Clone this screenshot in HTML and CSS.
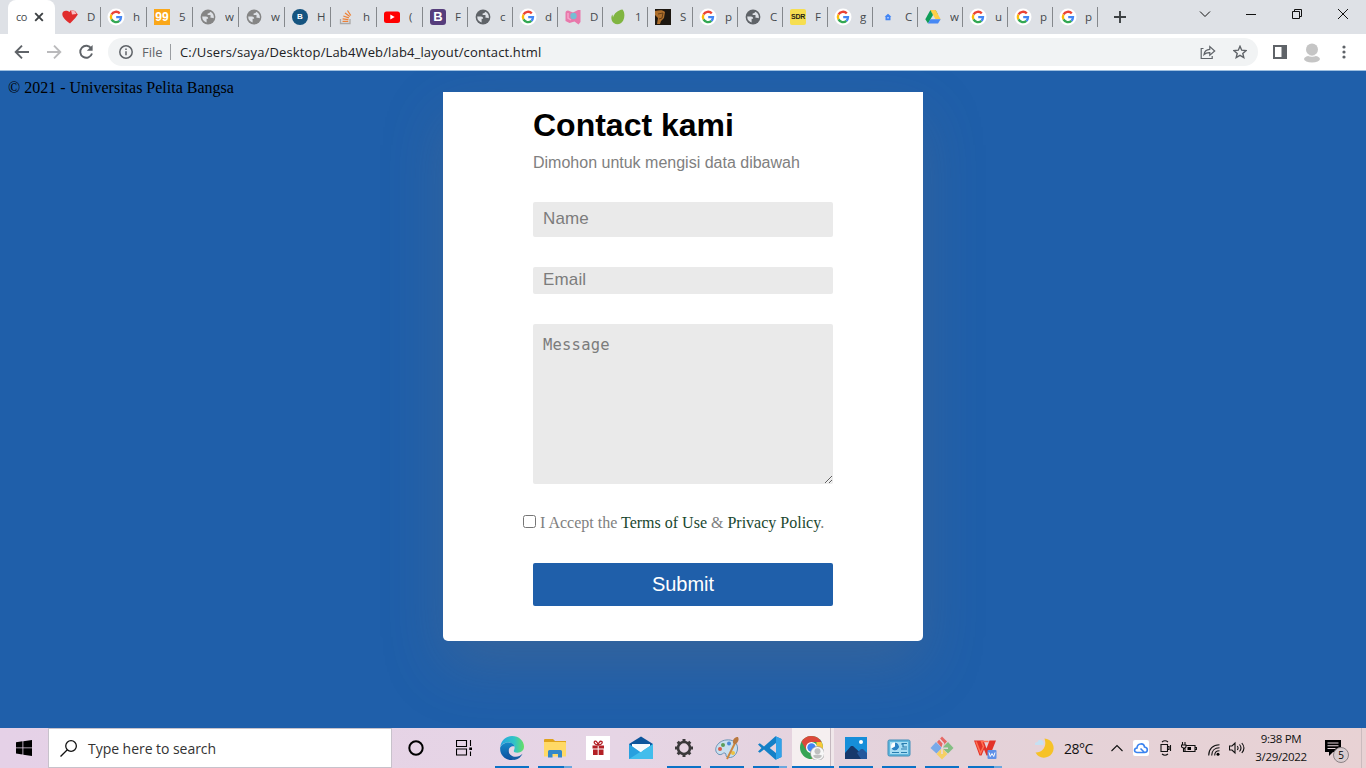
FILE: index.html
```html
<!DOCTYPE html>
<html lang="id">
<head>
<meta charset="utf-8">
<title>contact</title>
<link rel="stylesheet" href="styles.css">
</head>
<body>
<svg class="defs" aria-hidden="true">
  <symbol id="google" viewBox="0 0 18 18">
    <circle cx="9" cy="9" r="8.5" fill="#fff"/>
    <g fill="none" stroke-width="2.3">
      <path d="M12.8 5.4A5.1 5.1 0 0 0 4.5 6.6" stroke="#ea4335"/>
      <path d="M4.5 6.6A5.1 5.1 0 0 0 4.5 11.4" stroke="#fbbc05"/>
      <path d="M4.5 11.4A5.1 5.1 0 0 0 12.4 12.8" stroke="#34a853"/>
      <path d="M12.4 12.8A5.1 5.1 0 0 0 14 9.2H9.2" stroke="#4285f4"/>
    </g>
  </symbol>
  <symbol id="globe" viewBox="0 0 16 16">
    <circle cx="8" cy="8" r="7.4" fill="currentColor"/>
    <path d="M2.200 7.600H6Q8.300 7.700 8.200 9.800H6.600V13.600Q2.200 12 2.200 7.600zM10.200 2.700Q9.800 4.500 7.600 4.400V6H10.500V8.800Q12.800 8.400 13.800 9.200Q14.300 4.500 10.200 2.700z" fill="#dee1e6"/>
  </symbol>
</svg>

<header class="browser">
  <nav class="tabs">
    <div class="tab active"><span class="label">co</span>
      <svg class="close" viewBox="0 0 10 10"><path d="M1.200 1.200l7.600 7.600M8.800 1.200L1.200 8.800" stroke="#3c4043" stroke-width="1.900"/></svg></div>
    <div class="tab wide"><svg viewBox="0 0 16 16"><path d="M8 14.500C3 10.800.2 8 .3 4.700.5 1.300 5 .8 7.500 3L9 1l4 1 2.800 3.500L13.300 9z" fill="#e02d2d"/><path d="M9 1l1 4.500 4.500-.5-2-3z" fill="#f7bcc1"/></svg><span class="label">D</span></div>
    <div class="tab wide"><svg class="g"><use href="#google"/></svg><span class="label">h</span></div>
    <div class="tab wide"><span class="fav nine">99</span><span class="label">5</span></div>
    <div class="tab wide"><svg class="gray"><use href="#globe"/></svg><span class="label">w</span></div>
    <div class="tab wide"><svg class="gray"><use href="#globe"/></svg><span class="label">w</span></div>
    <div class="tab wide"><span class="fav round">B</span><span class="label">H</span></div>
    <div class="tab wide"><svg viewBox="0 0 16 16" fill="none"><path d="M2.500 10v4.500h9.500V10" stroke="#aaa8a7" stroke-width="1.300"/><path d="M4.500 12.400h5.800M4.600 9.800l5.800.8M5.300 7l5.600 1.800M7 4l4.800 3.500M9.500 1.500l3.300 5" stroke="#ed8137" stroke-width="1.250"/></svg><span class="label">h</span></div>
    <div class="tab wide"><svg viewBox="0 0 16 16"><rect y="2.500" width="16" height="11.500" rx="2.500" fill="#f00"/><path d="M6.300 5.600v5L10.700 8z" fill="#fff"/></svg><span class="label">(</span></div>
    <div class="tab"><span class="fav boot">B</span><span class="label">F</span></div>
    <div class="tab"><svg class="dark"><use href="#globe"/></svg><span class="label">c</span></div>
    <div class="tab"><svg class="g"><use href="#google"/></svg><span class="label">d</span></div>
    <div class="tab"><svg viewBox="0 0 16 16"><path d="M.5 4Q.5 1.500 3 1.500L8 3.500 13 1h2.500v12l-2 2.500-4-3-5 1.500L.5 12z" fill="#e878ab"/><circle cx="8.500" cy="7" r="3.200" fill="#76bdd3"/><path d="M3 4v5l3 2" fill="none" stroke="#f5a4ca" stroke-width="1.500"/></svg><span class="label">D</span></div>
    <div class="tab"><svg viewBox="0 0 16 16"><path d="M12.500 .5C14.800 3 15 8 13.200 11.500 11.500 15 7 16.500 3.800 14 .8 11.500.8 7.500 2.500 5.500L3 8.500C4 4.500 8 1 12.500 .5z" fill="#80b541"/></svg><span class="label">1</span></div>
    <div class="tab"><svg viewBox="0 0 16 16"><path d="M0 0h16v16H0z" fill="#1d1710"/><path d="M0 2c5-1 8-1 10 1l-1 6-3 3-1 3H2L3 9 0 6z" fill="#ae6f2c"/><path d="M3 5l5-1-1 5-3 1" stroke="#684016" fill="none"/></svg><span class="label">S</span></div>
    <div class="tab"><svg class="g"><use href="#google"/></svg><span class="label">p</span></div>
    <div class="tab"><svg class="dark"><use href="#globe"/></svg><span class="label">C</span></div>
    <div class="tab"><span class="fav sdr">SDR</span><span class="label">F</span></div>
    <div class="tab"><svg class="g"><use href="#google"/></svg><span class="label">g</span></div>
    <div class="tab"><svg viewBox="0 0 16 16"><path d="M8 4.800l3.400 3H10.500v3.400h-5V7.800H4.600z" fill="#4285f4"/><path d="M7 8h2v1.500H7z" fill="#9cc0ff"/></svg><span class="label">C</span></div>
    <div class="tab"><svg viewBox="0 0 16 16"><path d="M5.400 1h5.200l2.400 4.500L8 6z" fill="#1ea362"/><path d="M5.400 1L.3 10.200 3 14.500 8 6z" fill="#0f9d58"/><path d="M10.600 1l5.100 9.200H10.500L5.400 1z" fill="#ffcf48"/><path d="M5.400 10.200h10.300L13 14.500H3z" fill="#4688f4"/></svg><span class="label">w</span></div>
    <div class="tab"><svg class="g"><use href="#google"/></svg><span class="label">u</span></div>
    <div class="tab"><svg class="g"><use href="#google"/></svg><span class="label">p</span></div>
    <div class="tab"><svg class="g"><use href="#google"/></svg><span class="label">p</span></div>
    <svg class="plus" viewBox="0 0 12 12"><path d="M6 0v12M0 6h12" stroke="#3c4043" stroke-width="1.900"/></svg>
    <div class="window-buttons">
      <svg viewBox="0 0 12 12"><path d="M1 3.500l5 5 5-5"/></svg>
      <svg viewBox="0 0 12 12"><path d="M1 6.500h10"/></svg>
      <svg viewBox="0 0 12 12"><path d="M1.500 3.500h7v7h-7zM3.500 3.500v-2h7v7h-2"/></svg>
      <svg viewBox="0 0 12 12"><path d="M1 1l10 10M11 1L1 11"/></svg>
    </div>
  </nav>
  <div class="toolbar">
    <svg class="nav" viewBox="0 0 16 16"><path d="M15 8H2M8 1.700L1.700 8 8 14.300" stroke="#5f6368"/></svg>
    <svg class="nav" viewBox="0 0 16 16"><path d="M1 8h13M8 1.700L14.300 8 8 14.300" stroke="#bababc"/></svg>
    <svg class="nav" viewBox="0 0 16 16"><path d="M13.300 4.500A6 6 0 1 0 14 9.500" stroke="#5f6368"/><path d="M14.600 1v5.800H8.800z" fill="#5f6368"/></svg>
    <div class="address">
      <svg class="info" viewBox="0 0 14 14" fill="none" stroke="#5f6368" stroke-width="1.500"><circle cx="7" cy="7" r="6.200"/><path d="M7 6.200v4M7 3.400v1.500"/></svg>
      <span class="scheme">File</span>
      <span class="url">C:/Users/saya/Desktop/Lab4Web/lab4_layout/contact.html</span>
      <svg class="share" viewBox="0 0 16 16" fill="none" stroke="#5f6368" stroke-width="1.200"><path d="M3.500 4.500H1.200v10h11V12M4 10.500C4.500 7 6.500 5.500 9.800 5.300V2.500L14.700 7l-4.900 4.200V8.600C7 8.500 5.500 9 4 10.500z"/></svg>
      <svg class="star" viewBox="0 0 14 14" fill="none" stroke="#5f6368" stroke-width="1.400"><path d="M7 1.300l1.700 3.900 4.300.4-3.200 2.800 1 4.200L7 10.400l-3.800 2.200 1-4.200L1 5.600l4.300-.4z"/></svg>
    </div>
    <svg class="panel" viewBox="0 0 14 14"><path d="M0 0h14v14H0z" fill="#5f6368"/><path d="M2 2h6.500v10H2z" fill="#fff"/></svg>
    <svg class="avatar" viewBox="0 0 16 20"><circle cx="8" cy="6.500" r="6" fill="#c5c5c5"/><ellipse cx="8" cy="16" rx="8" ry="3.500" fill="#c5c5c5"/><path d="M2.300 11.500q5.700 4 11.400 0" fill="none" stroke="#fff" stroke-width=".8"/></svg>
    <svg class="menu" viewBox="0 0 4 14" fill="#5f6368"><circle cx="2" cy="2" r="1.600"/><circle cx="2" cy="7" r="1.600"/><circle cx="2" cy="12" r="1.600"/></svg>
  </div>
</header>

<main class="page">
  <footer class="copyright">© 2021 - Universitas Pelita Bangsa</footer>
  <form class="card">
    <h1>Contact kami</h1>
    <p class="intro">Dimohon untuk mengisi data dibawah</p>
    <input class="field name" type="text" placeholder="Name">
    <input class="field email" type="email" placeholder="Email">
    <textarea class="field message" placeholder="Message"></textarea>
    <label class="terms"><input type="checkbox"><span>I Accept the <a>Terms of Use</a> &amp; <a>Privacy Policy</a>.</span></label>
    <button class="submit" type="button">Submit</button>
  </form>
</main>

<div class="taskbar">
  <div class="start"><svg viewBox="0 0 16 16"><path d="M0 2.300L6.500 1.300v6.200H0zM7.300 1.200L16 0v7.500H7.300zM0 8.300h6.500v6.200L0 13.600zM7.300 8.300H16V16l-8.700-1.300z"/></svg></div>
  <div class="search"><svg viewBox="0 0 16 16" fill="none" stroke="#111" stroke-width="1.200"><circle cx="10.400" cy="5.600" r="5"/><path d="M6.900 9.200L.5 15.600"/></svg><span>Type here to search</span></div>
  <div class="tool cortana"><svg viewBox="0 0 16 16"><circle cx="8" cy="8" r="6.700" fill="none" stroke="#000" stroke-width="2"/></svg></div>
  <div class="tool"><svg viewBox="0 0 16 16" fill="none" stroke="#000" stroke-width="1.100"><path d="M.5 .5h10v6H.5zM.5 9h10v6H.5zM14.500 0v6M14.500 11.500V16"/><path d="M13.300 7.500h2.700v2.500h-2.700z" fill="#000" stroke="none"/></svg></div>
  <div class="apps">
    <div class="app open"><svg viewBox="0 0 24 24"><defs><linearGradient id="eg" x2="1"><stop stop-color="#24a6df"/><stop offset=".6" stop-color="#32c4c6"/><stop offset="1" stop-color="#67df63"/></linearGradient><linearGradient id="eb" x2="0" y2="1"><stop stop-color="#168bc9"/><stop offset="1" stop-color="#0c4f9f"/></linearGradient></defs><path d="M.3 11C1 4 6 0 12 0c7 0 12 5 12 10.500 0 4-3 6.200-6.500 6.200-3.500 0-4.200-1.200-3.500-2.500C16 10 13 6.500 8.500 6.500 4.500 6.500 1.500 8.500.3 11z" fill="url(#eg)"/><path d="M.2 11.500C1.500 8.500 5 6.500 8.800 6.500c2.800 0 5.200 1.500 5.700 4C12 9.500 8.500 11.500 8.500 15c0 4 4.500 7.500 9.500 6.500-2 1.800-4 2.500-6.500 2.500C5 24-.5 18.500.2 11.500z" fill="url(#eb)"/><path d="M9 12.500c-2 4.500 2.500 8.500 7 8.300 2.500-.1 4.500-1 6.500-3-1.500 3.500-4.500 5.700-8 6C8.500 22.500 5 17.500 9 12.500z" fill="#145ca3"/></svg></div>
    <div class="app open stacked"><svg viewBox="0 0 24 24"><path d="M1 4q0-1 1-1h8l2 2h11v14H1z" fill="#e0a31b"/><path d="M1 6h21q1 0 1 1v13.500H1z" fill="#ffd966"/><path d="M5 21.500v-6Q5 14 6.500 14h11Q19 14 19 15.500v6h-4V18H9.500v3.500z" fill="#3387c9"/></svg></div>
    <div class="app"><svg viewBox="0 0 24 24"><path d="M0 0h24v24H0z" fill="#fff"/><path d="M6.500 9.500H18v3H6.500zM7 13.500h10.500V19H7z" fill="#b32025"/><path d="M12.200 9.500V19" stroke="#fff"/><path d="M12.200 9C8 9 7.500 5.500 9 5.200s3 2 3.200 3.800C12.500 7 13.700 5 15.300 5.300 17 5.600 16.500 9 12.200 9z" fill="none" stroke="#b32025" stroke-width="1.300"/></svg></div>
    <div class="app"><svg viewBox="0 0 24 24"><path d="M0 8L12 .5 24 8v3H0z" fill="#0c559c"/><path d="M3 8h18v10H3z" fill="#fff"/><path d="M0 8l12 8.500L24 8v15H0z" fill="#28a0df"/><path d="M24 8L0 23h24z" fill="#42bdec"/><path d="M3 8h18l-9 8z" fill="#f4f9fd"/></svg></div>
    <div class="app open"><svg viewBox="0 0 24 24"><circle cx="12" cy="12" r="6" fill="none" stroke="#3b393b" stroke-width="2.600"/><path d="M12 3v4M12 17v4M3 12h4M17 12h4M5.700 5.700l2.500 2.500M15.800 15.800l2.500 2.500M5.700 18.300l2.500-2.500M15.800 8.200l2.500-2.500" stroke="#3b393b" stroke-width="3"/></svg></div>
    <div class="app open"><svg viewBox="0 0 24 24"><path d="M11 4c7-1 12 3 11.500 9S17 23 12 21c-2-1 0-3-2-4-2-.8-3 2.500-6 1.500C-3 15 2 5 11 4z" fill="#c9dfef" stroke="#6a93b6"/><circle cx="5" cy="13" r="2" fill="#d95d49"/><circle cx="8" cy="9" r="2" fill="#5b9e5b"/><circle cx="14" cy="7.500" r="2" fill="#4a89d6"/><circle cx="18" cy="17" r="2" fill="#ecc242"/><path d="M20.500 6L12 23" stroke="#cb873f" stroke-width="2"/><path d="M18 7c-.5-4 2-6 5-6 1.500 3 0 6-3.500 7.500z" fill="#b9783e"/></svg></div>
    <div class="app open stacked"><svg viewBox="0 0 24 24"><path d="M17.500.2L23.500 3v18l-6 2.800L6 13.500l-4.200 3.300L0 15.500 3.500 12 0 8.500l1.800-1.300L6 10.500zM18 7l-6.300 5 6.300 5z" fill="#1480c7" fill-rule="evenodd"/><path d="M18 .4L23.500 3v18L18 23.600z" fill="#30a2e9"/></svg></div>
    <div class="app open current"><svg viewBox="0 0 24 24"><circle cx="11.500" cy="11.500" r="11.500" fill="#36a455"/><path d="M1.500 5.700A11.500 11.500 0 0 1 21.500 6H11.500l-5 8.500z" fill="#dc493a"/><path d="M21.500 6a11.500 11.500 0 0 1-10 17l5-8.500V6z" fill="#fbc835"/><circle cx="11.500" cy="11.500" r="5.500" fill="#fff"/><circle cx="11.500" cy="11.500" r="4.200" fill="#4285f4"/><circle cx="17.500" cy="17.500" r="7" fill="#f7f7f7" stroke="#888" stroke-width=".6"/><circle cx="17.500" cy="15.300" r="3" fill="#bfbfbf"/><path d="M13 19.500q4.500-2 9 0-1 3-4.500 3t-4.500-3z" fill="#bfbfbf"/></svg></div>
    <div class="app open"><svg viewBox="0 0 24 24"><path d="M1 1h22v22H1z" fill="#168ed9"/><path d="M1 17l6-7h2l14 13H1z" fill="#17386b"/><path d="M13 17l4-4h2l4 4v6h-6z" fill="#25589c"/><circle cx="17" cy="6" r="2" fill="#fff"/></svg></div>
    <div class="app open"><svg viewBox="0 0 24 24"><rect x="1" y="4" width="22" height="16" rx="1.500" fill="#60b7dd" stroke="#438eb9"/><path d="M3 6h18v12H3z" fill="#a7ddf3"/><circle cx="8" cy="10.500" r="4" fill="#fff"/><path d="M8 10.500V6.500a4 4 0 1 1-3.500 6z" fill="#2b83c5"/><path d="M14 8h2v3h4M14 13h6M5 16.500h7M15 7.500h5M14 16.500h6" stroke="#287daf" fill="none" stroke-width="1.200"/></svg></div>
    <div class="app open"><svg viewBox="0 0 24 24"><path d="M12 .5l5 5-5.500 6L7 6z" fill="#e66864"/><path d="M6 6l6 6-5.500 5.500L.5 12z" fill="#78aae9"/><path d="M18 6l5.500 6-5.500 5.500L12 12z" fill="#83be83"/><path d="M12 12l5.500 6-5.500 5.500L6.500 18z" fill="#f5d064"/><path d="M9.500 3l4 4.500L12 12l6 .3M12 12v6" stroke="#ead7df" fill="none" stroke-width="1.500"/></svg></div>
    <div class="app open stacked"><svg viewBox="0 0 24 24"><path d="M1 4.500h9.500l3 8 3-8H23l-6 15h-3.500L11 13.500 8.500 19.500H6.500z" fill="#e33328"/><path d="M3 5.500L7.500 17l3-6.500-2-5h7" fill="none" stroke="#ff7053" stroke-width="1.500"/><rect x="14.500" y="14" width="9" height="9" rx="1" fill="#5f91e8"/><path d="M16 16.500l1.300 4 1.700-3 1.700 3 1.300-4" stroke="#fff" fill="none"/></svg></div>
  </div>
  <div class="tray">
    <svg class="moon" viewBox="0 0 20 20"><path d="M10.500 .5a9.600 9.600 0 1 1-9 14C8 15 13.500 9 10.500 .5z" fill="#f6c227"/><path d="M1 7q-.5-3 2.500-3 1-3 4-2 2.500 1 2 5z" fill="#c6e0f2"/></svg>
    <span class="temp">28°C</span>
    <svg class="chev" viewBox="0 0 12 12"><path d="M.5 9L6 3.500 11.500 9"/></svg>
    <svg class="cloud" viewBox="0 0 16 16"><rect width="16" height="16" rx="2" fill="#fff"/><path d="M11.500 12.500H4C.5 12 1 8.200 4 8c0-5 7-5.500 7.500-1 4 .5 3.500 5.500 0 5.500L7.500 8.500" stroke="#3b83ef" stroke-width="1.600" fill="none"/></svg>
    <svg class="cam" viewBox="0 0 12 16"><path d="M1 4.500h6.500v7H1zM7.500 6.500H9v3H7.500M10.500 5v6M2 2q3-2.500 6 0M2 14q3 2.500 6 0"/></svg>
    <svg class="battery" viewBox="0 0 16 12"><path d="M5 3.500h9v6H4V6M14.500 5.500h1v2h-1M1.500 0v3M4 0v3M.5 3h4.500v2L3.500 6.500 .5 5zM2.500 6v3.500h2"/><path d="M6.500 5H10v3H6.500z" fill="#000" stroke="none"/></svg>
    <svg class="wifi" viewBox="0 0 12 12"><path d="M.7 11.500C.7 5 5 .8 11.500.8M3.700 11.500c0-4.700 3.100-7.700 7.800-7.700M6.700 11.500c0-3 1.800-4.700 4.800-4.700"/><circle cx="10" cy="10.200" r="1.500" fill="#000" stroke="none"/></svg>
    <svg class="speaker" viewBox="0 0 16 14"><path d="M.5 5h2.500l3-3v10L3 9H.5zM8.300 5q1.500 2 0 4M10.500 3.500q3 3.500 0 7M12.800 2q4.300 5 0 10"/></svg>
    <div class="clock"><span>9:38 PM</span><span>3/29/2022</span></div>
    <div class="notice"><svg viewBox="0 0 16 16"><path d="M0 0h16v12h-8l-4 4v-4H0z"/><path d="M2.500 3h11M2.500 5.800h11M2.500 8.500h8" stroke="#e6d5db" stroke-width="1.100"/></svg><span class="count">5</span></div>
  </div>
</div>
</body>
</html>
```
FILE: styles.css
```css
* { box-sizing: border-box; }
body { margin: 0; width: 1366px; height: 768px; overflow: hidden; display: flex; flex-direction: column; font-family: "Open Sans", "Noto Sans", sans-serif; }
svg { display: block; flex: none; }
.defs { display: none; }

.browser { height: 71px; flex: none; background: #fff; border-bottom: 1px solid #9dbfe0; }
.tabs { height: 34px; background: #dee1e6; display: flex; padding-left: 8px; align-items: center; }
.tab { width: 45px; height: 20px; padding-left: 7px; border-right: 1px solid #85888c; display: flex; align-items: center; flex: none; }
.tab.wide { width: 46px; }
.tab.active + .tab { border-right-color: #85888c; }
.tab svg { width: 16px; height: 16px; }
.tab svg.g { width: 18px; height: 18px; margin: 0 -1px; }
.label { margin-left: 9px; width: 10px; overflow: hidden; font-size: 11.5px; line-height: 16px; color: #45494d; white-space: nowrap; }
.tab.active { width: 47px; height: 34px; padding: 0 0 0 8px; border: 0; border-radius: 8px 8px 0 0; background: #fff; }
.tab.active .label { margin: 0; width: 12px; font-size: 11px; letter-spacing: -.5px; }
.tab.active .close { width: 10px; height: 10px; margin-left: 6px; }
.gray { color: #858585; }
.dark { color: #5f6368; }
.fav { width: 16px; height: 16px; flex: none; text-align: center; color: #fff; font: bold 12px/16px "Liberation Sans", sans-serif; }
.nine { background: #faa719; }
.round { background: #155480; border-radius: 50%; font-size: 8px; }
.boot { background: #563d7c; border-radius: 3px; font-size: 13px; }
.sdr { background: #f6de50; border-radius: 2px; color: #272417; font-size: 7px; letter-spacing: -.3px; }
.plus { width: 12px; height: 12px; margin-left: 16px; }
.window-buttons { margin: -6px 17px 0 auto; display: flex; gap: 34px; }
.window-buttons svg { width: 12px; height: 12px; fill: none; stroke: #111; stroke-width: 1; }

.toolbar { height: 36px; display: flex; align-items: center; padding-left: 14px; }
.nav { width: 16px; height: 16px; margin-right: 16px; fill: none; stroke-width: 1.9; }
.address { height: 28px; width: 1150px; border-radius: 14px; background: #f1f3f4; display: flex; align-items: center; padding: 0 11px; margin-left: -2px; font-size: 13px; }
.info { width: 14px; height: 14px; }
.scheme { box-sizing: content-box; width: 21px; margin-left: 9px; padding-right: 7px; border-right: 1px solid #9a9da1; line-height: 16px; color: #5f6368; }
.url { margin-left: 9px; color: #202124; letter-spacing: .14px; }
.share { width: 16px; height: 16px; margin-left: auto; }
.star { width: 14px; height: 14px; margin-left: 17px; }
.panel { width: 14px; height: 14px; margin-left: 15px; }
.avatar { width: 16px; height: 20px; margin: 2px 0 0 17px; }
.menu { width: 4px; height: 14px; margin-left: 22px; }

.page { flex: 1; min-height: 0; overflow: hidden; background: #1f5faa; display: grid; grid-template-columns: 1fr 480px 1fr; align-items: start; }
.copyright { padding: 8px 0 0 8px; font: 16px/18px "Liberation Serif", serif; color: #000; }
.card { height: 549px; margin-top: 21px; padding: 16px 90px 0; background: #fff; border-radius: 0 0 5px 5px; box-shadow: 0 25px 60px rgba(119, 114, 114, .25); font-family: "Liberation Sans", sans-serif; }
.card h1 { margin: 0; font-size: 32px; line-height: 34px; }
.intro { margin: 11px 0 30px; font-size: 16px; line-height: 19px; color: #808080; }
.field { display: block; width: 300px; margin: 0 0 30px; padding: 0 10px; border: 0; border-radius: 2px; background: #eaeaea; font: 17px "Liberation Sans", sans-serif; outline: 0; }
.field::placeholder { color: #7c7c7c; letter-spacing: .15px; }
.name { height: 35px; padding-bottom: 1px; }
.email { height: 27px; padding-bottom: 2px; }
.message { height: 160px; padding-top: 11px; font: 16px/20px "DejaVu Sans Mono", monospace; }
.message::placeholder { font-size: 15.500px; letter-spacing: .2px; }
.terms { display: flex; margin: 0 -10px 0; height: 18px; color: #808080; font: 16px/18px "Liberation Serif", serif; white-space: nowrap; }
.terms input { width: 13px; height: 13px; margin: 1px 4px 0 0; }
.terms a { color: #19472f; }
.submit { display: block; width: 300px; height: 43px; margin-top: 31px; padding: 0; border: 0; border-radius: 2px; background: #1f5faa; color: #fff; font: 20px "Liberation Sans", sans-serif; }

.taskbar { height: 40px; flex: none; background: linear-gradient(90deg, #e5d1e7, #e6d5e5 45%, #e4d2d9 70%, #e8d2d4); display: flex; }
.start { width: 48px; flex: none; display: grid; place-items: center; }
.start svg { width: 16px; height: 16px; }
.search { width: 344px; flex: none; background: #fff; border: 1px solid #c7c2cb; display: flex; align-items: center; padding-left: 11px; font-size: 14px; letter-spacing: -.04px; color: #333; }
.search svg { width: 17px; height: 17px; margin-right: 11px; }
.tool { width: 48px; flex: none; display: grid; place-items: center; }
.tool svg { width: 16px; height: 16px; }
.apps { display: flex; flex: none; margin-left: 7px; }
.app { width: 34px; margin-right: 9px; display: grid; place-items: center; border-bottom: 2px solid transparent; padding-top: 2px; }
.app svg { width: 24px; height: 24px; }
.open { border-color: #0c72c6; }
.stacked { border-image: linear-gradient(90deg, #0c72c6 76%, #6ba7de 76%) 1; }
.current { width: 42px; margin: 0 5px 0 -4px; padding-right: 2px; background: linear-gradient(90deg, #f5eff0 38px, #c4b8bf 38px, #c4b8bf 39px, #f0e7ea 39px); }
.tray { flex: 1; display: flex; align-items: center; padding-left: 23px; border-right: 1px solid #cbbbbe; margin-right: 4px; }
.tray svg { fill: none; stroke: #111; stroke-width: 1.1; }
.tray .moon, .tray .cloud { stroke: none; }
.moon { width: 20px; height: 20px; }
.temp { width: 35px; margin-left: 10px; font-size: 14px; letter-spacing: -.5px; color: #111; }
.chev { width: 12px; height: 12px; margin-left: 12px; }
.cloud { width: 16px; height: 16px; margin-left: 10px; }
.cam { width: 12px; height: 16px; margin-left: 11px; }
.battery { width: 16px; height: 12px; margin-left: 9px; }
.wifi { width: 12px; height: 12px; margin: 3px 0 0 11px; }
.speaker { width: 16px; height: 14px; margin-left: 9px; }
.clock { width: 64px; margin-left: 4px; display: grid; text-align: center; font-size: 11.500px; line-height: 18px; letter-spacing: -.35px; color: #111; }
.notice { position: relative; width: 16px; margin-left: 12px; }
.notice svg { width: 16px; height: 16px; fill: #000; stroke: none; }
.count { position: absolute; left: 8px; top: 7px; width: 16px; height: 16px; border: 1px solid #8b8285; border-radius: 50%; background: #d9cdd0; text-align: center; font-size: 10px; line-height: 14px; }
```
